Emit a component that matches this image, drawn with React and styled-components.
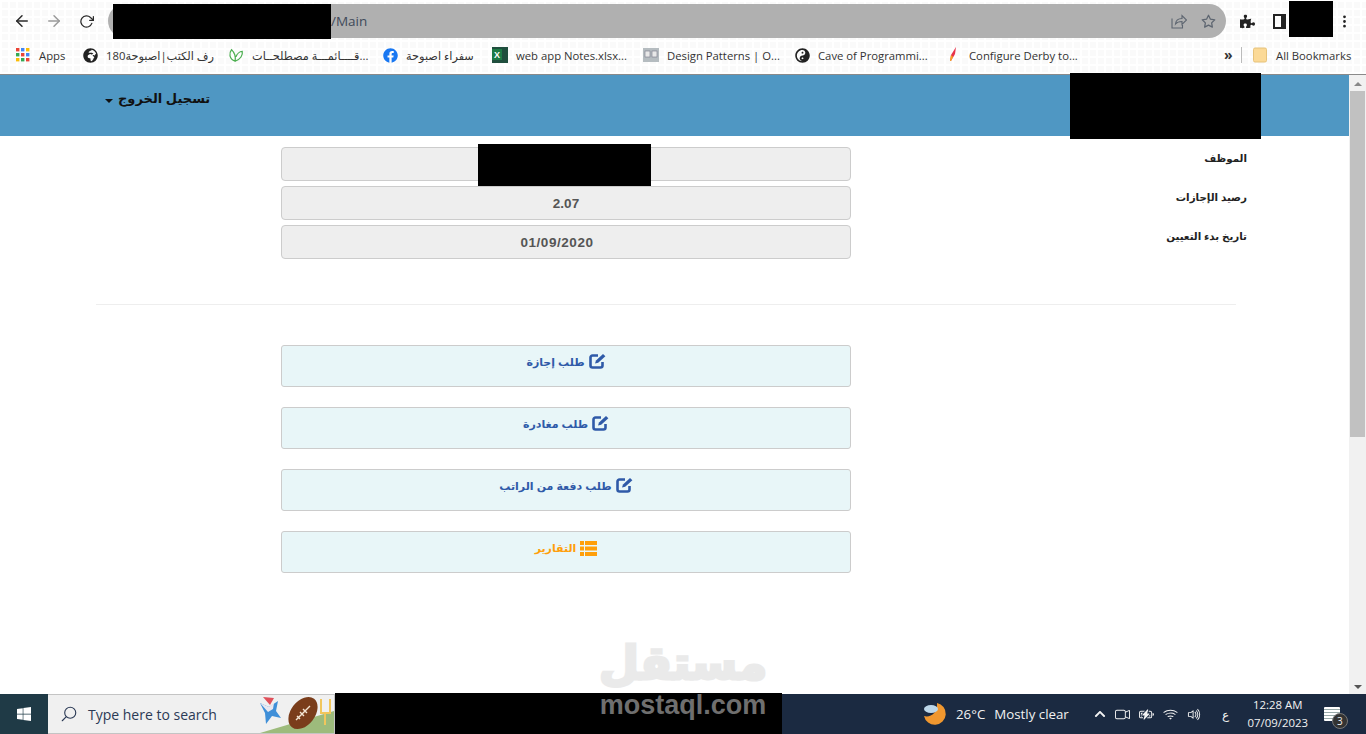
import React from "react";
import styled, { createGlobalStyle } from "styled-components";
import { FiArrowLeft, FiArrowRight, FiRotateCw, FiStar } from "react-icons/fi";
import { FaPuzzlePiece, FaGlobeAfrica, FaFacebook, FaYinYang, FaWindows, FaChevronUp } from "react-icons/fa";
import { IoSearchOutline } from "react-icons/io5";
import { BsThreeDotsVertical, BsWifi, BsVolumeUp, BsBatteryCharging, BsCameraVideo } from "react-icons/bs";

const GlobalStyle = createGlobalStyle`
   html, body {
      margin: 0;
      padding: 0;
      height: 100%;
      overflow: hidden;
      background: #fff;
      font-family: "Liberation Sans", "DejaVu Sans", sans-serif;
   }
   #root {
      height: 100%;
   }
`;

const Screen = styled.div`
   position: relative;
   width: 1366px;
   height: 734px;
   display: flex;
   flex-direction: column;
   overflow: hidden;
`;

const Redact = styled.div`
   position: absolute;
   left: ${(p) => p.$x}px;
   top: ${(p) => p.$y}px;
   width: ${(p) => p.$w}px;
   height: ${(p) => p.$h}px;
   background: #000;
   z-index: 5;
`;

/* browser chrome */
const BrowserBar = styled.div`
   height: 75px;
   flex: none;
   box-sizing: border-box;
   border-bottom: 1px solid #8a8a8a;
   background-color: #fafafa;
   background-image: linear-gradient(#ffffff 2px, transparent 2px),
      linear-gradient(90deg, #ffffff 2px, transparent 2px);
   background-size: 8px 8px;
`;

const ToolRow = styled.div`
   height: 38px;
   display: flex;
   align-items: center;
   padding: 4px 0 0 12px;
   box-sizing: border-box;
`;

const NavButton = styled.div`
   width: 20px;
   height: 20px;
   margin-right: 12px;
   display: flex;
   align-items: center;
   justify-content: center;
   font-size: ${(p) => p.$size || 19}px;
   color: ${(p) => (p.$off ? "#9a9a9a" : "#2b2b2b")};
   stroke-width: 2.6;
`;

const Omnibox = styled.div`
   width: 1118px;
   height: 34px;
   border-radius: 17px;
   background: #b0b0b0;
   display: flex;
   align-items: center;
   padding-left: 223px;
   padding-right: 10px;
   box-sizing: border-box;
   color: #3f4a5a;
   font-family: "Open Sans", sans-serif;
   font-size: 13.5px;
`;

const UrlText = styled.span`
   flex: 1;
`;

const OmniIcon = styled.span`
   display: flex;
   margin-left: 14px;
   font-size: 15px;
   color: #5d6570;
`;

const ToolIcons = styled.div`
   display: flex;
   align-items: center;
   margin-left: 14px;
   gap: 18px;
   color: #222;
   font-size: 15px;
`;

const SidePanel = styled.span`
   width: 6px;
   height: 11px;
   border: 2px solid #222;
   border-right-width: 5px;
`;

const MenuDots = styled.span`
   display: flex;
   margin-left: 33px;
   font-size: 15px;
`;

const BookmarkRow = styled.div`
   height: 34px;
   display: flex;
   align-items: center;
   padding-left: 15px;
   font-family: "Open Sans", "DejaVu Sans", sans-serif;
   font-size: 11.3px;
   color: #333;
`;

const Bookmark = styled.div`
   width: ${(p) => p.$w}px;
   display: flex;
   align-items: center;
   flex: none;
   gap: 8px;
   white-space: nowrap;
   overflow: hidden;
`;

const FavIcon = styled.span`
   width: 16px;
   height: 16px;
   flex: none;
   display: flex;
   align-items: center;
   justify-content: center;
   font-size: 15px;
   color: ${(p) => p.$c || "#222"};
`;

const Overflow = styled.span`
   margin-left: -4px;
   width: 14px;
   font-size: 14px;
   font-weight: 700;
   line-height: 14px;
`;

const BarDivider = styled.span`
   width: 1px;
   height: 16px;
   background: #bbb;
   margin: 0 10px 0 3px;
`;

/* page */
const Viewport = styled.div`
   flex: 1;
   display: flex;
   min-height: 0;
`;

const Page = styled.div`
   flex: 1;
   min-width: 0;
   background: #fff;
`;

const Header = styled.header`
   height: 61px;
   background: #4f97c3;
   padding: 14px 0 0 105px;
   box-sizing: border-box;
`;

const LogoutMenu = styled.div`
   display: inline-flex;
   direction: rtl;
   align-items: center;
   gap: 5px;
   font-size: 13px;
   font-weight: 700;
   letter-spacing: -0.6px;
   line-height: 20px;
   color: #111;
`;

const Caret = styled.span`
   width: 0;
   height: 0;
   margin-top: 4px;
   border-left: 4px solid transparent;
   border-right: 4px solid transparent;
   border-top: 4px solid #111;
`;

const Content = styled.main`
   width: 1140px;
   margin-left: 96px;
   padding-top: 11px;
`;

const InfoGrid = styled.div`
   display: grid;
   grid-template-columns: 570px 396px;
   justify-content: start;
   margin-left: 185px;
   row-gap: 5px;
`;

const ReadOnly = styled.div`
   height: 34px;
   box-sizing: border-box;
   background: #eee;
   border: 1px solid #ccc;
   border-radius: 4px;
   display: flex;
   align-items: center;
   justify-content: center;
   padding-right: ${(p) => p.$shift || 0}px;
   letter-spacing: ${(p) => (p.$shift ? 0.55 : 0)}px;
   font-size: 13.5px;
   font-weight: 700;
   color: #555;
`;

const Label = styled.div`
   direction: rtl;
   font-size: 10.3px;
   font-weight: 700;
   letter-spacing: -0.7px;
   line-height: 24px;
   color: #222;
   height: 34px;
`;

const Rule = styled.hr`
   margin: 45px 0 40px;
   border: 0;
   border-top: 1px solid #eee;
`;

const ActionList = styled.div`
   margin-left: 185px;
   width: 570px;
   display: flex;
   flex-direction: column;
   gap: 20px;
`;

const ActionButton = styled.div`
   height: 42px;
   box-sizing: border-box;
   background: #e8f6f8;
   border: 1px solid #ccc;
   border-radius: 3px;
   display: flex;
   direction: rtl;
   align-items: flex-start;
   justify-content: center;
   gap: 4px;
   padding-top: 6px;
   font-size: 11px;
   font-weight: 700;
   letter-spacing: -0.65px;
   line-height: 20px;
   color: ${(p) => p.$c};
`;

const IconSlot = styled.span`
   display: flex;
   margin-top: ${(p) => p.$top}px;
`;

const ScrollTrack = styled.div`
   width: 17px;
   flex: none;
   background: #f1f1f1;
   display: flex;
   flex-direction: column;
   align-items: center;
   position: relative;
`;

const ScrollArrow = styled.span`
   width: 0;
   height: 0;
   margin-top: 7px;
   border-left: 4px solid transparent;
   border-right: 4px solid transparent;
   border-bottom: 4px solid #888;
`;

const ScrollThumb = styled.div`
   width: 15px;
   height: 346px;
   margin-top: 5px;
   background: #c1c1c1;
`;

const ScrollArrowDown = styled(ScrollArrow)`
   position: absolute;
   bottom: 5px;
   border-bottom: 0;
   border-top: 4px solid #555;
`;

/* taskbar */
const Taskbar = styled.footer`
   height: 40px;
   flex: none;
   display: flex;
   background: #1b2a41;
   color: #f2f2f2;
   font-family: "Open Sans", sans-serif;
`;

const StartButton = styled.div`
   width: 48px;
   flex: none;
   background: #1f3a46;
   display: flex;
   align-items: center;
   justify-content: center;
   font-size: 16px;
   color: #fff;
`;

const SearchBox = styled.div`
   width: 287px;
   flex: none;
   position: relative;
   box-sizing: border-box;
   background: #f0f0f0;
   border: 1px solid #c4c4c4;
   border-left: 0;
   display: flex;
   align-items: center;
   padding-left: 12px;
   gap: 10px;
   color: #2b3a55;
   font-size: 14px;
   overflow: hidden;
`;

const Turf = styled.svg`
   position: absolute;
   right: 0;
   top: 0;
`;

const TaskSpacer = styled.div`
   width: 447px;
   flex: none;
`;

const Tray = styled.div`
   flex: 1;
   display: flex;
   align-items: center;
   padding-left: 141px;
   font-size: 13.3px;
`;

const Weather = styled.span`
   margin-left: 9px;
   white-space: nowrap;
`;

const WeatherText = styled.span`
   margin-left: 9px;
`;

const TrayIcons = styled.div`
   display: flex;
   align-items: center;
   gap: 9px;
   margin-left: 25px;
   font-size: 15px;
`;

const Lang = styled.span`
   margin-left: 20px;
   font-size: 12px;
`;

const Clock = styled.div`
   width: 70px;
   margin-left: 14px;
   text-align: center;
   font-size: 11.4px;
   line-height: 18px;
   flex: none;
`;

const Notify = styled.div`
   position: relative;
   margin-left: 11px;
   width: 16px;
   height: 14px;
   background: repeating-linear-gradient(#fff 0 2px, #9aa 2px 3px);
   border-radius: 1px;
`;

const NotifyBadge = styled.span`
   position: absolute;
   left: 8px;
   top: 6px;
   width: 16px;
   height: 16px;
   border-radius: 50%;
   background: #333;
   border: 1px solid #777;
   box-sizing: border-box;
   font-size: 10px;
   line-height: 14px;
   text-align: center;
   color: #eee;
`;

/* watermark */
const Watermark = styled.div`
   position: absolute;
   left: 590px;
   top: 634px;
   width: 186px;
   text-align: center;
   z-index: 6;
   pointer-events: none;
`;

const WatermarkAr = styled.div`
   direction: rtl;
   font-family: "DejaVu Sans", sans-serif;
   font-size: 46px;
   font-weight: 700;
   line-height: 58px;
   color: #e7e7e7;
   -webkit-text-stroke: 3px #e7e7e7;
   opacity: 0.85;
`;

const WatermarkEn = styled.div`
   font-family: "Liberation Sans", sans-serif;
   font-size: 27px;
   font-weight: 700;
   line-height: 26px;
   color: #6f6f6f;
`;

const EditIcon = () => (
   <svg width="17" height="16" viewBox="0 0 17 16" fill="none">
      <path d="M9 2.5H3.5a2 2 0 0 0-2 2v8a2 2 0 0 0 2 2h8a2 2 0 0 0 2-2V9" stroke="#2f5aa8" strokeWidth="2.6" />
      <path d="M6 10.5l1-3 7-6.5 2.4 2.2L9.2 9.8z" fill="#2f5aa8" />
   </svg>
);

const ListIcon = () => (
   <svg width="17" height="15" viewBox="0 0 17 15" fill="#ff9f0a">
      <rect x="0" y="0" width="4" height="4" />
      <rect x="5" y="0" width="12" height="4" />
      <rect x="0" y="5.5" width="4" height="4" />
      <rect x="5" y="5.5" width="12" height="4" />
      <rect x="0" y="11" width="4" height="4" />
      <rect x="5" y="11" width="12" height="4" />
   </svg>
);

const ShareIcon = () => (
   <svg width="16" height="16" viewBox="0 0 16 16" fill="none" stroke="#5d6570" strokeWidth="1.1">
      <path d="M1 5.5V15h10.5v-3" />
      <path d="M4.5 11c.3-3.5 3-5.5 6.5-5.5V2.5l4.5 4.5-4.5 4.5V8.5c-2.7 0-5 .7-6.5 2.5z" />
   </svg>
);

const AppsIcon = () => (
   <svg width="14" height="14" viewBox="0 0 14 14">
      {["#ea4335", "#4285f4", "#fbbc05", "#34a853", "#ea4335", "#4285f4", "#fbbc05", "#34a853", "#ea4335"].map((c, i) => (
         <rect key={i} x={(i % 3) * 5} y={Math.floor(i / 3) * 5} width="3.4" height="3.4" fill={c} />
      ))}
   </svg>
);

const LeafIcon = () => (
   <svg width="18" height="16" viewBox="0 0 18 16" fill="none" stroke="#4caf50" strokeWidth="1.4">
      <path d="M8 15C1 12 1 6 4 2c3 3 5 7 4 13zM8 15c6-2 9-7 8-11-3 0-6 3-7 6" />
   </svg>
);

const ExcelIcon = () => (
   <svg width="16" height="16" viewBox="0 0 16 16">
      <rect width="16" height="16" fill="#1f4e3d" />
      <rect x="0" y="2" width="10" height="11" fill="#1d7a45" />
      <text x="2" y="11" fontSize="9" fontWeight="700" fill="#fff" fontFamily="Liberation Sans">X</text>
   </svg>
);

const PatternIcon = () => (
   <svg width="16" height="14" viewBox="0 0 16 14">
      <rect width="16" height="14" fill="#b5bcc0" />
      <rect x="2" y="3" width="5" height="6" fill="#e8e8e8" stroke="#778" strokeWidth=".6" />
      <rect x="9" y="3" width="5" height="6" fill="#e8e8e8" stroke="#778" strokeWidth=".6" />
   </svg>
);

const QuillIcon = () => (
   <svg width="10" height="16" viewBox="0 0 10 16">
      <path d="M8 0L3 8l-1 6 1 0 4-7z" fill="#e8324a" />
      <path d="M3 8l-1 6 1 0 2-4z" fill="#f5a623" />
   </svg>
);

const FolderIcon = () => (
   <svg width="14" height="16" viewBox="0 0 14 16">
      <rect x="0.5" y="1" width="13" height="14" rx="1.5" fill="#fbd996" stroke="#e6c27a" />
   </svg>
);

const MoonIcon = () => (
   <svg width="24" height="24" viewBox="0 0 24 24">
      <path d="M14 1a11 11 0 1 1-13 13c6 2 14-3 13-13z" fill="#f0972f" />
      <ellipse cx="8" cy="7" rx="7" ry="4" fill="#bcd7ea" />
   </svg>
);

const bookmarks = [
   { w: 67, icon: <AppsIcon />, label: "Apps" },
   { w: 146, icon: <FaGlobeAfrica />, label: "رف الكتب|اصبوحة180" },
   { w: 154, icon: <LeafIcon />, label: "قــــائمـــة مصطلحــات..." },
   { w: 110, icon: <FaFacebook />, c: "#1877f2", label: "سفراء اصبوحة" },
   { w: 151, icon: <ExcelIcon />, label: "web app Notes.xlsx..." },
   { w: 151, icon: <PatternIcon />, label: "Design Patterns | O..." },
   { w: 151, icon: <FaYinYang />, label: "Cave of Programmi..." },
   { w: 283, icon: <QuillIcon />, label: "Configure Derby to..." },
];

const details = [
   { label: "الموظف", value: "" },
   { label: "رصيد الإجازات", value: "2.07" },
   { label: "تاريخ بدء التعيين", value: "01/09/2020", shift: 18 },
];

const actions = [
   { label: "طلب إجازة", icon: <EditIcon />, color: "#2f5aa8", top: 1 },
   { label: "طلب مغادرة", icon: <EditIcon />, color: "#2f5aa8", top: 1 },
   { label: "طلب دفعة من الراتب", icon: <EditIcon />, color: "#2f5aa8", top: 1 },
   { label: "التقارير", icon: <ListIcon />, color: "#ff9f0a", top: 3 },
];

const App = () => {
   return (
      <Screen>
         <GlobalStyle />
         <BrowserBar>
            <ToolRow>
               <NavButton $size={18}><FiArrowLeft /></NavButton>
               <NavButton $size={18} $off><FiArrowRight /></NavButton>
               <NavButton $size={15}><FiRotateCw /></NavButton>
               <Omnibox>
                  <UrlText>/Main</UrlText>
                  <OmniIcon><ShareIcon /></OmniIcon>
                  <OmniIcon><FiStar /></OmniIcon>
               </Omnibox>
               <ToolIcons>
                  <FaPuzzlePiece />
                  <SidePanel />
                  <MenuDots><BsThreeDotsVertical /></MenuDots>
               </ToolIcons>
            </ToolRow>
            <BookmarkRow>
               {bookmarks.map((b) => (
                  <Bookmark key={b.label} $w={b.w}>
                     <FavIcon $c={b.c}>{b.icon}</FavIcon>
                     <span>{b.label}</span>
                  </Bookmark>
               ))}
               <Overflow>»</Overflow>
               <BarDivider />
               <Bookmark $w={100}>
                  <FavIcon><FolderIcon /></FavIcon>
                  <span>All Bookmarks</span>
               </Bookmark>
            </BookmarkRow>
         </BrowserBar>

         <Viewport>
            <Page>
               <Header>
                  <LogoutMenu>
                     تسجيل الخروج
                     <Caret />
                  </LogoutMenu>
               </Header>
               <Content>
                  <InfoGrid>
                     {details.map((d) => (
                        <React.Fragment key={d.label}>
                           <ReadOnly $shift={d.shift}>{d.value}</ReadOnly>
                           <Label>{d.label}</Label>
                        </React.Fragment>
                     ))}
                  </InfoGrid>
                  <Rule />
                  <ActionList>
                     {actions.map((a) => (
                        <ActionButton key={a.label} $c={a.color}>
                           <IconSlot $top={a.top}>{a.icon}</IconSlot>
                           <span>{a.label}</span>
                        </ActionButton>
                     ))}
                  </ActionList>
               </Content>
            </Page>
            <ScrollTrack>
               <ScrollArrow />
               <ScrollThumb />
               <ScrollArrowDown />
            </ScrollTrack>
         </Viewport>

         <Taskbar>
            <StartButton><FaWindows /></StartButton>
            <SearchBox>
               <IoSearchOutline size={18} style={{ transform: "scaleX(-1)" }} />
               Type here to search
               <Turf width="78" height="38" viewBox="0 0 78 38">
                  <path d="M78 16V38H4z" fill="#9dbb7c" />
                  <path d="M4 8l9 4 9-6-2 10 5 7-9-2-6 8-1-11z" fill="#3f8fd8" />
                  <path d="M4 8l9 4 5-4-1 6-5 3z" fill="#e8e8f0" />
                  <path d="M7 2l7 8 4-7z" fill="#e0505a" />
                  <ellipse cx="47" cy="18" rx="12" ry="18" transform="rotate(38 47 18)" fill="#7a3d1b" />
                  <path d="M40 25l14-14M44 17l4 4M47 14l4 4M41 21l3 3" stroke="#f4e6d4" strokeWidth="1.4" />
                  <path d="M65 4v14h9V4M69 18v12" fill="none" stroke="#f1c65c" strokeWidth="2" />
               </Turf>
            </SearchBox>
            <TaskSpacer />
            <Tray>
               <MoonIcon />
               <Weather>26°C<WeatherText>Mostly clear</WeatherText></Weather>
               <TrayIcons>
                  <FaChevronUp size={12} />
                  <BsCameraVideo />
                  <BsBatteryCharging />
                  <BsWifi />
                  <BsVolumeUp />
               </TrayIcons>
               <Lang>ع</Lang>
               <Clock>12:28 AM<br />07/09/2023</Clock>
               <Notify><NotifyBadge>3</NotifyBadge></Notify>
            </Tray>
         </Taskbar>

         <Redact $x={113} $y={4} $w={218} $h={35} />
         <Redact $x={1289} $y={1} $w={44} $h={36} />
         <Redact $x={1070} $y={73} $w={191} $h={66} />
         <Redact $x={478} $y={144} $w={173} $h={42} />
         <Redact $x={335} $y={693} $w={447} $h={41} />

         <Watermark>
            <WatermarkAr>مستقل</WatermarkAr>
            <WatermarkEn>mostaql.com</WatermarkEn>
         </Watermark>
      </Screen>
   );
};

export default App;
